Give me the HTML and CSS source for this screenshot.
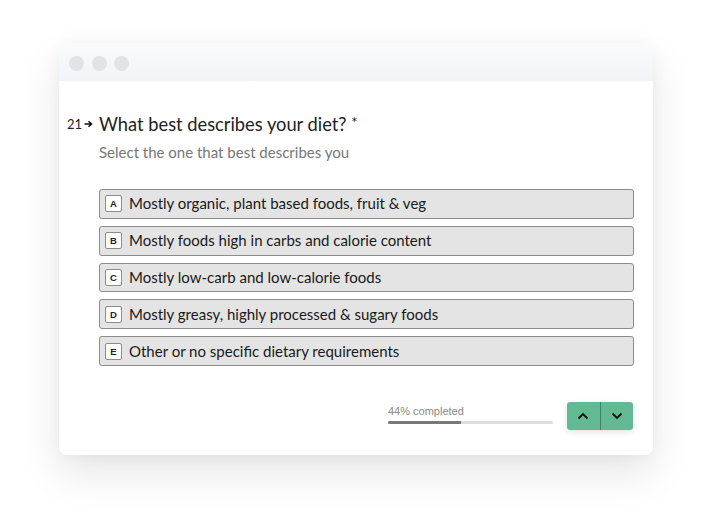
FILE: index.html
```html
<!DOCTYPE html>
<html lang="en">
<head>
<meta charset="utf-8">
<title>Diet question</title>
<link rel="stylesheet" href="styles.css">
</head>
<body>
<div class="window">
  <div class="titlebar">
    <span class="dot"></span><span class="dot"></span><span class="dot"></span>
  </div>
  <div class="content">
    <div class="question">
      <div class="qnum">21<svg class="arrow" width="9" height="8" viewBox="0 0 9 8"><path d="M0.5 4H7M4.5 1.2L7.6 4L4.5 6.8" fill="none" stroke="#111" stroke-width="1.5"/></svg></div>
      <div class="qbody">
        <h1 class="qtitle">What best describes your diet? <span class="req">*</span></h1>
        <p class="qsub">Select the one that best describes you</p>
        <ul class="options">
          <li class="option"><span class="key">A</span><span class="label">Mostly organic, plant based foods, fruit &amp; veg</span></li>
          <li class="option"><span class="key">B</span><span class="label">Mostly foods high in carbs and calorie content</span></li>
          <li class="option"><span class="key">C</span><span class="label">Mostly low-carb and low-calorie foods</span></li>
          <li class="option"><span class="key">D</span><span class="label">Mostly greasy, highly processed &amp; sugary foods</span></li>
          <li class="option"><span class="key">E</span><span class="label">Other or no specific dietary requirements</span></li>
        </ul>
      </div>
    </div>
    <div class="footer">
      <div class="progress">
        <div class="ptext">44% completed</div>
        <div class="pbar"><div class="pfill" style="width:44%"></div></div>
      </div>
      <div class="navbtns">
        <button class="nav up" aria-label="Previous"><svg width="12" height="8" viewBox="0 0 12 8"><polyline points="1.5,6.5 6,2 10.5,6.5" fill="none" stroke="#111" stroke-width="1.8"/></svg></button>
        <button class="nav down" aria-label="Next"><svg width="12" height="8" viewBox="0 0 12 8"><polyline points="1.5,1.5 6,6 10.5,1.5" fill="none" stroke="#111" stroke-width="1.8"/></svg></button>
      </div>
    </div>
  </div>
</div>
</body>
</html>
```

FILE: styles.css
```css
html, body {
  margin: 0;
  padding: 0;
  background: #ffffff;
}
body {
  width: 707px;
  height: 512px;
  overflow: hidden;
  font-family: Lato, "Noto Sans", sans-serif;
}
.window {
  margin: 43px 0 0 59px;
  width: 594px;
  height: 412px;
  background: #fff;
  border-radius: 6px 6px 8px 8px;
  box-shadow: 0 18px 40px rgba(0,0,0,0.10), 0 2px 14px rgba(0,0,0,0.04);
  display: flex;
  flex-direction: column;
  overflow: hidden;
}
.titlebar {
  height: 38px;
  background: linear-gradient(#fafbfc, #f1f3f7);
  display: flex;
  align-items: center;
  gap: 7.5px;
  padding-left: 10px;
  padding-top: 2px;
  box-sizing: border-box;
}
.dot {
  width: 15px;
  height: 15px;
  border-radius: 50%;
  background: #e2e3e6;
}
.content {
  padding: 29px 19px 0 8px;
  display: flex;
  flex-direction: column;
}
.question {
  display: flex;
}
.qnum {
  width: 32px;
  flex: none;
  font-size: 13px;
  color: #222;
  line-height: 24px;
  display: flex;
  align-items: center;
  gap: 2px;
  height: 24px;
  padding-top: 3px;
  box-sizing: border-box;
}
.arrow { display: block; }
.qbody { flex: 1; }
.qtitle {
  margin: 0;
  font-size: 18.3px;
  font-weight: 400;
  line-height: 24px;
  color: #222;
}
.req { font-size: 15px; vertical-align: 3px; }
.qsub {
  margin: 7px 0 0;
  font-size: 15px;
  line-height: 19px;
  color: #777;
}
.options {
  list-style: none;
  margin: 27px 0 0;
  padding: 0;
  display: flex;
  flex-direction: column;
  gap: 7px;
}
.option {
  height: 29.8px;
  box-sizing: border-box;
  background: #e4e4e4;
  border: 1px solid #8c8c8c;
  border-radius: 3px;
  display: flex;
  align-items: center;
  padding-left: 5px;
  gap: 7px;
}
.key {
  width: 17px;
  height: 17px;
  box-sizing: border-box;
  border: 1px solid #8c8c8c;
  border-radius: 2px;
  background: #fff;
  font-family: "Liberation Sans", Arial, sans-serif;
  font-size: 9.5px;
  font-weight: 700;
  color: #222;
  display: flex;
  align-items: center;
  justify-content: center;
}
.label {
  font-size: 15px;
  color: #1a1a1a;
  line-height: 19px;
}
.footer {
  display: flex;
  justify-content: flex-end;
  align-items: flex-start;
  margin-top: 36px;
  gap: 14px;
  padding-right: 1px;
}
.progress {
  width: 165px;
  padding-top: 3px;
}
.ptext {
  font-family: "Liberation Sans", Arial, sans-serif;
  font-size: 11px;
  line-height: 13px;
  color: #8a8a8a;
}
.pbar {
  margin-top: 3px;
  height: 3px;
  border-radius: 2px;
  background: #dddddd;
  overflow: hidden;
}
.pfill {
  height: 100%;
  background: #787878;
}
.navbtns {
  display: flex;
  width: 66px;
  height: 28px;
  border-radius: 3px;
  overflow: hidden;
  box-shadow: 0 2px 6px rgba(0,0,0,0.12);
}
.nav {
  flex: 1;
  border: 0;
  margin: 0;
  padding: 0;
  background: #63b993;
  display: flex;
  align-items: center;
  justify-content: center;
}
.nav.up { border-right: 1px solid #3f7f62; }
```
